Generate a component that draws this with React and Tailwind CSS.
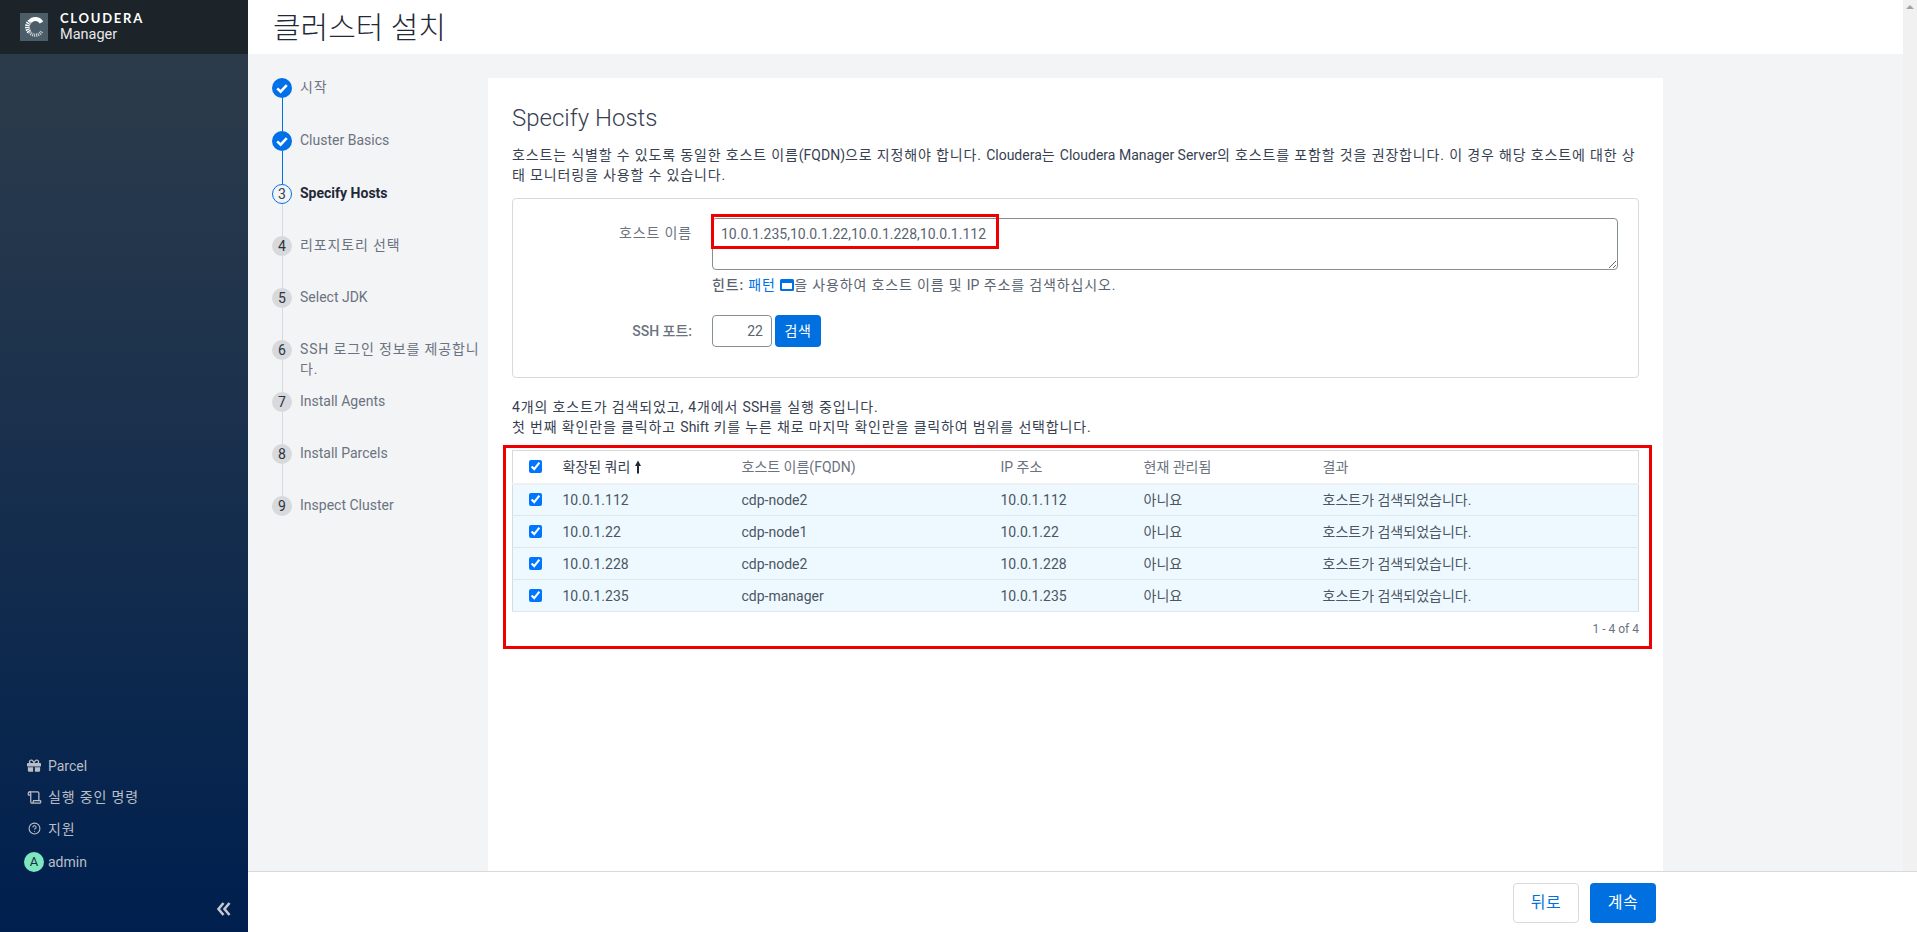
import React from "react";
import { CircleHelp, Scroll } from "lucide-react";
import { FaGift } from "react-icons/fa";

const fontStack = "font-['Roboto','Noto_Sans_CJK_KR',sans-serif]";

const steps = [
  { label: "시작", done: true, height: "h-[53px]", ko: true },
  { label: "Cluster Basics", done: true, height: "h-[53px]" },
  { label: "Specify Hosts", active: true, height: "h-[52px]" },
  { label: "리포지토리 선택", height: "h-[52px]", ko: true },
  { label: "Select JDK", height: "h-[52px]" },
  { label: "SSH 로그인 정보를 제공합니다.", height: "h-[52px]", ko: true },
  { label: "Install Agents", height: "h-[52px]" },
  { label: "Install Parcels", height: "h-[52px]" },
  { label: "Inspect Cluster", height: "h-[52px]" },
];

const hosts = [
  { query: "10.0.1.112", name: "cdp-node2" },
  { query: "10.0.1.22", name: "cdp-node1" },
  { query: "10.0.1.228", name: "cdp-node2" },
  { query: "10.0.1.235", name: "cdp-manager" },
];

const CheckCircle = () => (
  <svg viewBox="0 0 20 20" className="w-5 h-5 block">
    <circle cx="10" cy="10" r="10" fill="#0070e8" />
    <path d="M5.2 10.4 8.6 13.6 14.8 7.2" fill="none" stroke="#fff" strokeWidth="2.6" />
  </svg>
);

const ClouderaLogo = () => (
  <div className="w-7 h-7 bg-[#4a5d68]">
    <svg viewBox="0 0 28 28" className="w-7 h-7 block">
      <path d="M21.5 9.5 A7 7 0 0 0 10 8.5" fill="none" stroke="#fff" strokeWidth="4" />
      <path d="M10 8.5 A7 7 0 0 0 9.5 19" fill="none" stroke="#fff" strokeWidth="4.6" strokeDasharray="1.3 0.7" />
      <path d="M9.5 19 A7 7 0 0 0 21.5 18.5" fill="none" stroke="#cfd6da" strokeWidth="3.4" strokeDasharray="1 0.9" />
    </svg>
  </div>
);

const Sidebar = () => (
  <aside className="w-[248px] shrink-0 flex flex-col bg-gradient-to-b from-[#2f3d4a] to-[#001f4e]">
    <div className="h-[54px] bg-[#1c2329] flex items-center pl-5 gap-3 text-white">
      <ClouderaLogo />
      <div>
        <div className="font-['Lato',sans-serif] font-bold text-[13px] leading-[15px] tracking-[1.75px]">
          CLOUDERA
        </div>
        <div className="text-[14.5px] leading-[17px] text-[#e6e8ea]">Manager</div>
      </div>
    </div>
    <div className="flex-1" />
    <nav className="text-sm text-[#b9bec6]">
      <div className="h-[31px] flex items-center pl-[27px] gap-[7px]">
        <FaGift className="w-[14px] h-[15px]" />
        <span>Parcel</span>
      </div>
      <div className="h-[32px] flex items-center pl-[27px] gap-[6px]">
        <Scroll className="w-[15px] h-[15px]" />
        <span className="tracking-[0.85px]">실행 중인 명령</span>
      </div>
      <div className="h-[31px] flex items-center pl-[28px] gap-[7px]">
        <CircleHelp className="w-[13px] h-[13px]" />
        <span className="tracking-[0.85px]">지원</span>
      </div>
      <div className="h-[34px] flex items-center pl-6 gap-1 mt-px">
        <div className="w-5 h-5 rounded-full bg-[#7de8c0] text-[#1f2d3d] flex items-center justify-center text-[13px]">
          A
        </div>
        <span>admin</span>
      </div>
    </nav>
    <div className="h-[53px] flex items-end justify-end pr-4 pb-[15px]">
      <svg viewBox="0 0 16 16" className="w-4 h-4 text-[#c4c8ce]">
        <path d="M7.5 2 2.5 8l5 6M13.5 2l-5 6 5 6" fill="none" stroke="currentColor" strokeWidth="2.6" />
      </svg>
    </div>
  </aside>
);

const Steps = () => (
  <ol className="w-[240px] shrink-0 pt-6 pl-6 pr-2 text-sm leading-5 text-[#6b7280]">
    {steps.map((step, index) => {
      const last = index === steps.length - 1;
      return (
        <li key={step.label} className={`flex gap-2 ${step.height}`}>
          <div className="w-5 shrink-0 flex flex-col items-center">
            {step.done ? (
              <CheckCircle />
            ) : step.active ? (
              <div className="w-5 h-5 shrink-0 rounded-full border border-[#0070e8] flex items-center justify-center text-[#374151]">
                {index + 1}
              </div>
            ) : (
              <div className="w-5 h-5 shrink-0 rounded-full bg-[#d8d9dd] flex items-center justify-center text-[#2b3440]">
                {index + 1}
              </div>
            )}
            {!last && (
              <div className={`flex-1 w-px ${step.done ? "bg-[#0070e8]" : "bg-[#d8d9dd]"}`} />
            )}
          </div>
          <div
            className={`-mt-px ${step.active ? "font-bold text-[#1f2937]" : ""} ${step.ko ? "tracking-[0.85px]" : ""}`}
          >
            {step.label}
          </div>
        </li>
      );
    })}
  </ol>
);

const HostForm = () => (
  <div className="mt-[13px] h-[180px] border border-[#d8dade] rounded-sm pt-[19px] pl-[57px] pr-5 text-[#6b7280]">
    <div className="flex">
      <label className="w-[122px] shrink-0 text-right leading-5 pt-[5px] tracking-[0.85px]">호스트 이름</label>
      <div className="ml-5 flex-1">
        <div className="relative">
          <textarea
            defaultValue="10.0.1.235,10.0.1.22,10.0.1.228,10.0.1.112"
            className="block w-full h-[52px] border border-[#868e96] rounded-sm px-2 py-[5px] leading-5 text-[#5a6470] outline-none"
          />
          <div className="absolute -left-px -top-1 w-[288px] h-[35px] border-[3px] border-[#ee0000] pointer-events-none" />
        </div>
        <p className="mt-[5px] leading-5 text-[#5a6470] tracking-[0.85px]">
          <span className="font-medium">힌트:</span> <span className="text-[#0070e8]">패턴</span>{" "}
          <svg viewBox="0 0 14 12" className="inline-block w-[14px] h-3 align-[-1px]">
            <rect width="14" height="12" rx="1.5" fill="#0070e8" />
            <rect x="2" y="4" width="10" height="6" fill="#fff" />
          </svg>
          을 사용하여 호스트 이름 및 <span className="tracking-normal">IP</span> 주소를 검색하십시오.
        </p>
      </div>
    </div>
    <div className="flex mt-5">
      <label className="w-[122px] shrink-0 text-right font-medium leading-8">SSH 포트:</label>
      <div className="ml-5 flex gap-[3px]">
        <input
          defaultValue="22"
          className="w-[60px] h-8 border border-[#868e96] rounded-sm px-2 text-right text-[#5a6470] outline-none"
        />
        <button className="w-[46px] h-8 bg-[#0070e0] rounded-sm text-white tracking-[0.5px]">검색</button>
      </div>
    </div>
  </div>
);

const SortArrow = () => (
  <svg viewBox="0 0 8 14" className="w-2 h-[14px] text-[#1f2937]">
    <path d="M4 0.5 7 6H5V13.5H3V6H1Z" fill="currentColor" />
  </svg>
);

const HostTable = () => (
  <div className="relative mt-[13px]">
    <table className="w-full table-fixed border border-[#d8dade] border-b-0 border-collapse text-sm">
      <colgroup>
        <col className="w-[40px]" />
        <col className="w-[179px]" />
        <col className="w-[259px]" />
        <col className="w-[143px]" />
        <col className="w-[179px]" />
        <col />
      </colgroup>
      <thead>
        <tr className="h-[33px] border-b-2 border-[#eeeff1] text-left text-[#6b7280]">
          <th className="pl-4 font-normal">
            <input type="checkbox" defaultChecked readOnly className="block accent-[#0075ff]" />
          </th>
          <th className="px-[10px] font-normal text-[#374151]">
            <span className="flex items-center gap-1">
              확장된 쿼리 <SortArrow />
            </span>
          </th>
          <th className="px-[10px] font-normal">호스트 이름(FQDN)</th>
          <th className="px-[10px] font-normal">IP 주소</th>
          <th className="px-[10px] font-normal">현재 관리됨</th>
          <th className="px-[10px] font-normal">결과</th>
        </tr>
      </thead>
      <tbody>
        {hosts.map((host) => (
          <tr key={host.query} className="h-8 bg-[#eef9ff] border-b border-[#dfe6ec] text-[#4b5563]">
            <td className="pl-4">
              <input type="checkbox" defaultChecked readOnly className="block accent-[#0075ff]" />
            </td>
            <td className="px-[10px]">{host.query}</td>
            <td className="px-[10px]">{host.name}</td>
            <td className="px-[10px]">{host.query}</td>
            <td className="px-[10px]">아니요</td>
            <td className="px-[10px]">호스트가 검색되었습니다.</td>
          </tr>
        ))}
      </tbody>
    </table>
    <div className="h-[33px] flex items-center justify-end text-xs text-[#6b7280]">1 - 4 of 4</div>
    <div className="absolute -left-[9px] -top-[5px] -right-[13px] -bottom-1 border-[3px] border-[#ee0000] pointer-events-none" />
  </div>
);

export default function App() {
  return (
    <div className={`h-[932px] flex overflow-hidden bg-white ${fontStack}`}>
      <Sidebar />
      <div className="flex-1 min-w-0 flex flex-col">
        <div className="flex-1 min-h-0 flex">
          <div className="flex-1 min-w-0 flex flex-col bg-[#f3f4f6]">
            <header className="h-[54px] shrink-0 bg-white flex items-center pl-[25px] text-[30px] font-light text-[#1f2937]">
              클러스터 설치
            </header>
            <div className="flex-1 min-h-0 flex">
              <Steps />
              <main className="w-[1175px] mt-6 bg-white px-6 pt-[25px] text-sm">
                <h1 className="text-2xl leading-[30px] font-light text-[#374151]">Specify Hosts</h1>
                <p className="mt-3 leading-5 text-[#374151] tracking-[0.85px]">
                  호스트는 식별할 수 있도록 동일한 호스트 이름<span className="tracking-normal">(FQDN)</span>으로 지정해야 합니다.{" "}
                  <span className="tracking-normal">Cloudera</span>는 <span className="tracking-normal">Cloudera Manager Server</span>의
                  호스트를 포함할 것을 권장합니다. 이 경우 해당 호스트에 대한 상태 모니터링을 사용할 수 있습니다.
                </p>
                <HostForm />
                <div className="mt-[19px] leading-5 text-[#374151] tracking-[0.85px]">
                  <p>
                    4개의 호스트가 검색되었고, 4개에서 <span className="tracking-normal">SSH</span>를 실행 중입니다.
                  </p>
                  <p>
                    첫 번째 확인란을 클릭하고 <span className="tracking-normal">Shift</span> 키를 누른 채로 마지막 확인란을 클릭하여 범위를 선택합니다.
                  </p>
                </div>
                <HostTable />
              </main>
            </div>
          </div>
          <div className="w-[14px] shrink-0 bg-[#f1f1f1] flex justify-center pt-[5px]">
            <div className="w-0 h-0 border-x-[4px] border-x-transparent border-b-[4px] border-b-[#a3a3a3]" />
          </div>
        </div>
        <footer className="h-[61px] shrink-0 border-t border-[#d8d9dd] bg-white flex justify-end items-start pt-[11px] pr-[261px] gap-[11px]">
          <button className="w-[66px] h-10 border border-[#d8dade] rounded-sm text-base text-[#0070e0] tracking-[0.5px]">뒤로</button>
          <button className="w-[66px] h-10 bg-[#0070e0] rounded-sm text-base text-white tracking-[0.5px]">계속</button>
        </footer>
      </div>
    </div>
  );
}
